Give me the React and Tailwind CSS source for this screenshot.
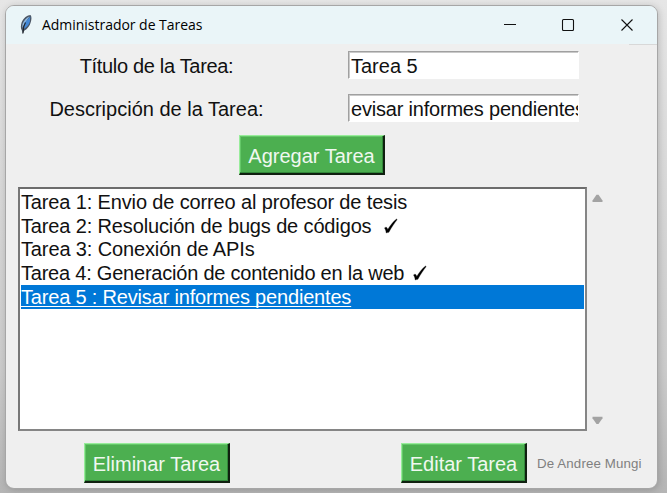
import React from "react";

const tasks = [
  { text: "Tarea 1: Envio de correo al profesor de tesis", cls: "tracking-[-0.14px]" },
  { text: "Tarea 2: Resolución de bugs de códigos", cls: "tracking-[-0.14px]", check: "ml-[13px]" },
  { text: "Tarea 3: Conexión de APIs", cls: "tracking-[-0.13px]" },
  { text: "Tarea 4: Generación de contenido en la web", cls: "tracking-[-0.22px]", check: "ml-[9px]" },
  { text: "Tarea 5 : Revisar informes pendientes", cls: "tracking-[-0.18px]", selected: true },
];

function Feather() {
  return (
    <svg width="14" height="22" viewBox="0 0 14 22" className="shrink-0">
      <path d="M11.500 1C8.500 1 4.200 4 2.600 8.500C1.600 11.500 1.600 14.500 2.800 16.200L3.800 19.800L5.200 16.800C8.500 15.200 11 11.500 11.800 8C12.500 5.500 13 3 11.500 1Z" fill="#4a5463" />
      <path d="M10.600 2.200C7.800 3.400 4.800 6.200 3.500 10L3.200 14L6.400 8.500Z" fill="#8fb9e0" />
      <path d="M11.300 2.600L5.800 8.500L4.600 15C8 13.300 10.200 10.500 10.900 7.500Z" fill="#4388d6" />
      <path d="M6.500 8.500L4.800 12.500L3.900 19.500" fill="none" stroke="#20242b" strokeWidth="1.1" />
    </svg>
  );
}

function Check({ className }) {
  return (
    <svg width="14" height="16" viewBox="0 0 14 16" className={className}>
      <path d="M0.500 9.900C1.700 8.900 2.900 9.100 3.300 10.300L3.700 11.600C6 7.600 8.800 4 12.500 1L13.200 1.600C10.200 5.700 7.100 9.800 4.900 14.300C3.800 14.500 3 14.700 2.200 15C2 13.400 1.600 11.500 0.500 9.900Z" fill="#000" stroke="#000" strokeWidth="0.3" />
    </svg>
  );
}

function Button({ className, children }) {
  return (
    <button
      className={
        "flex h-[40px] shrink-0 items-center justify-center whitespace-nowrap border-t border-l border-r-2 border-b-2 border-t-[#98ec9b] border-l-[#98ec9b] border-r-[#102010] border-b-[#102010] bg-[#4caf50] pt-[2px] text-[20px] leading-none text-[#f0f8f0] shadow-[inset_-1px_-1px_0_#32883a,inset_1px_1px_0_#64c868] " +
        className
      }
    >
      {children}
    </button>
  );
}

function Entry({ children, className }) {
  return (
    <div className="flex h-[28px] w-[231px] items-center overflow-hidden whitespace-nowrap border-t border-l border-r border-b border-t-[#a0a0a0] border-l-[#a0a0a0] border-r-white border-b-white bg-white pt-px pl-[2px] text-[20px] leading-none shadow-[inset_1px_1px_0_#c9c9c9]">
      <span className={"block shrink-0 " + className}>{children}</span>
    </div>
  );
}

export default function App() {
  return (
    <div className="h-[493px] w-[667px] overflow-hidden bg-[linear-gradient(180deg,#e6e6e6_0%,#dedede_20%,#cbcbcb_75%,#b5b5b5_100%)] pt-[5px] pl-[5px] font-['Liberation_Sans',Arial,sans-serif] text-[#111]">
      <div className="flex h-[484px] w-[653px] flex-col overflow-hidden rounded-[9px] border border-[#a6a6a6] bg-[#efefef] shadow-[1px_1px_7px_rgba(0,0,0,0.18)]">
        <header className="flex h-[38px] shrink-0 items-center bg-[#eaf5f8] pl-[13px]">
          <Feather />
          <h1 className="ml-[9px] grow pb-[2px] font-['Open_Sans','Noto_Sans',sans-serif] text-[14px] tracking-[-0.03px] text-black">Administrador de Tareas</h1>
          <svg width="131" height="14" viewBox="0 0 131 14" className="mr-[23px] shrink-0" fill="none" stroke="#111" strokeWidth="1.1">
            <path d="M1 6.500H13" />
            <rect x="59.500" y="1.500" width="11" height="11" rx="1" />
            <path d="M118.500 1.500L129.500 12.500M129.500 1.500L118.500 12.500" />
          </svg>
        </header>
        <div className="h-px w-[28px] shrink-0 self-end bg-[#d8d8d8]" />

        <div className="mt-[6px] grid shrink-0 grid-cols-[301px_231px] gap-x-[41px] gap-y-[15px]">
          <label className="flex h-[28px] items-center justify-center whitespace-nowrap pt-[2px] text-[20px] leading-none tracking-[-0.32px]">Título de la Tarea:</label>
          <Entry className="">Tarea 5</Entry>
          <label className="flex h-[28px] items-center justify-center whitespace-nowrap pt-px text-[20px] leading-none">Descripción de la Tarea:</label>
          <Entry className="tracking-[-0.2px]">evisar informes pendientes</Entry>
        </div>

        <div className="mt-[13px] flex shrink-0 pl-[233px]">
          <Button className="w-[146px]">Agregar Tarea</Button>
        </div>

        <div className="mt-[12px] flex shrink-0 pl-[12px]">
          <ul className="h-[244px] w-[569px] border-2 border-t-[#6c6c6c] border-l-[#777] border-r-[#858585] border-b-[#858585] bg-white pt-px pr-px pl-px">
            {tasks.map((t) => (
              <li key={t.text} className={"flex h-[23.75px] items-center whitespace-nowrap text-[20px] leading-none " + (t.selected ? "bg-[#0078d7] text-white" : "text-[#111]")}>
                <span className={t.cls + (t.selected ? " underline decoration-1 underline-offset-2 [text-decoration-skip-ink:none]" : "")}>{t.text}</span>
                {t.check && <Check className={t.check} />}
              </li>
            ))}
          </ul>
          <div className="flex flex-col justify-between pt-[7px] pb-[6px] pl-[5px]">
            <svg width="11" height="9" viewBox="0 0 11 9">
              <path d="M4.500 0.700H6.500L10.500 6.500V8H0.500V6.500Z" fill="#a3a3a3" />
            </svg>
            <svg width="11" height="9" viewBox="0 0 11 9">
              <path d="M0.500 0.800H10.500V2.200L6.500 8H4.500L0.500 2.200Z" fill="#a3a3a3" />
            </svg>
          </div>
        </div>

        <div className="mt-[12px] flex shrink-0 items-center pl-[78px]">
          <Button className="w-[146px]">Eliminar Tarea</Button>
          <Button className="ml-[171px] w-[126px]">Editar Tarea</Button>
          <span className="ml-[10px] whitespace-nowrap pt-px text-[13.300px] tracking-[0.13px] text-[#808080]">De Andree Mungi</span>
        </div>
      </div>
    </div>
  );
}
